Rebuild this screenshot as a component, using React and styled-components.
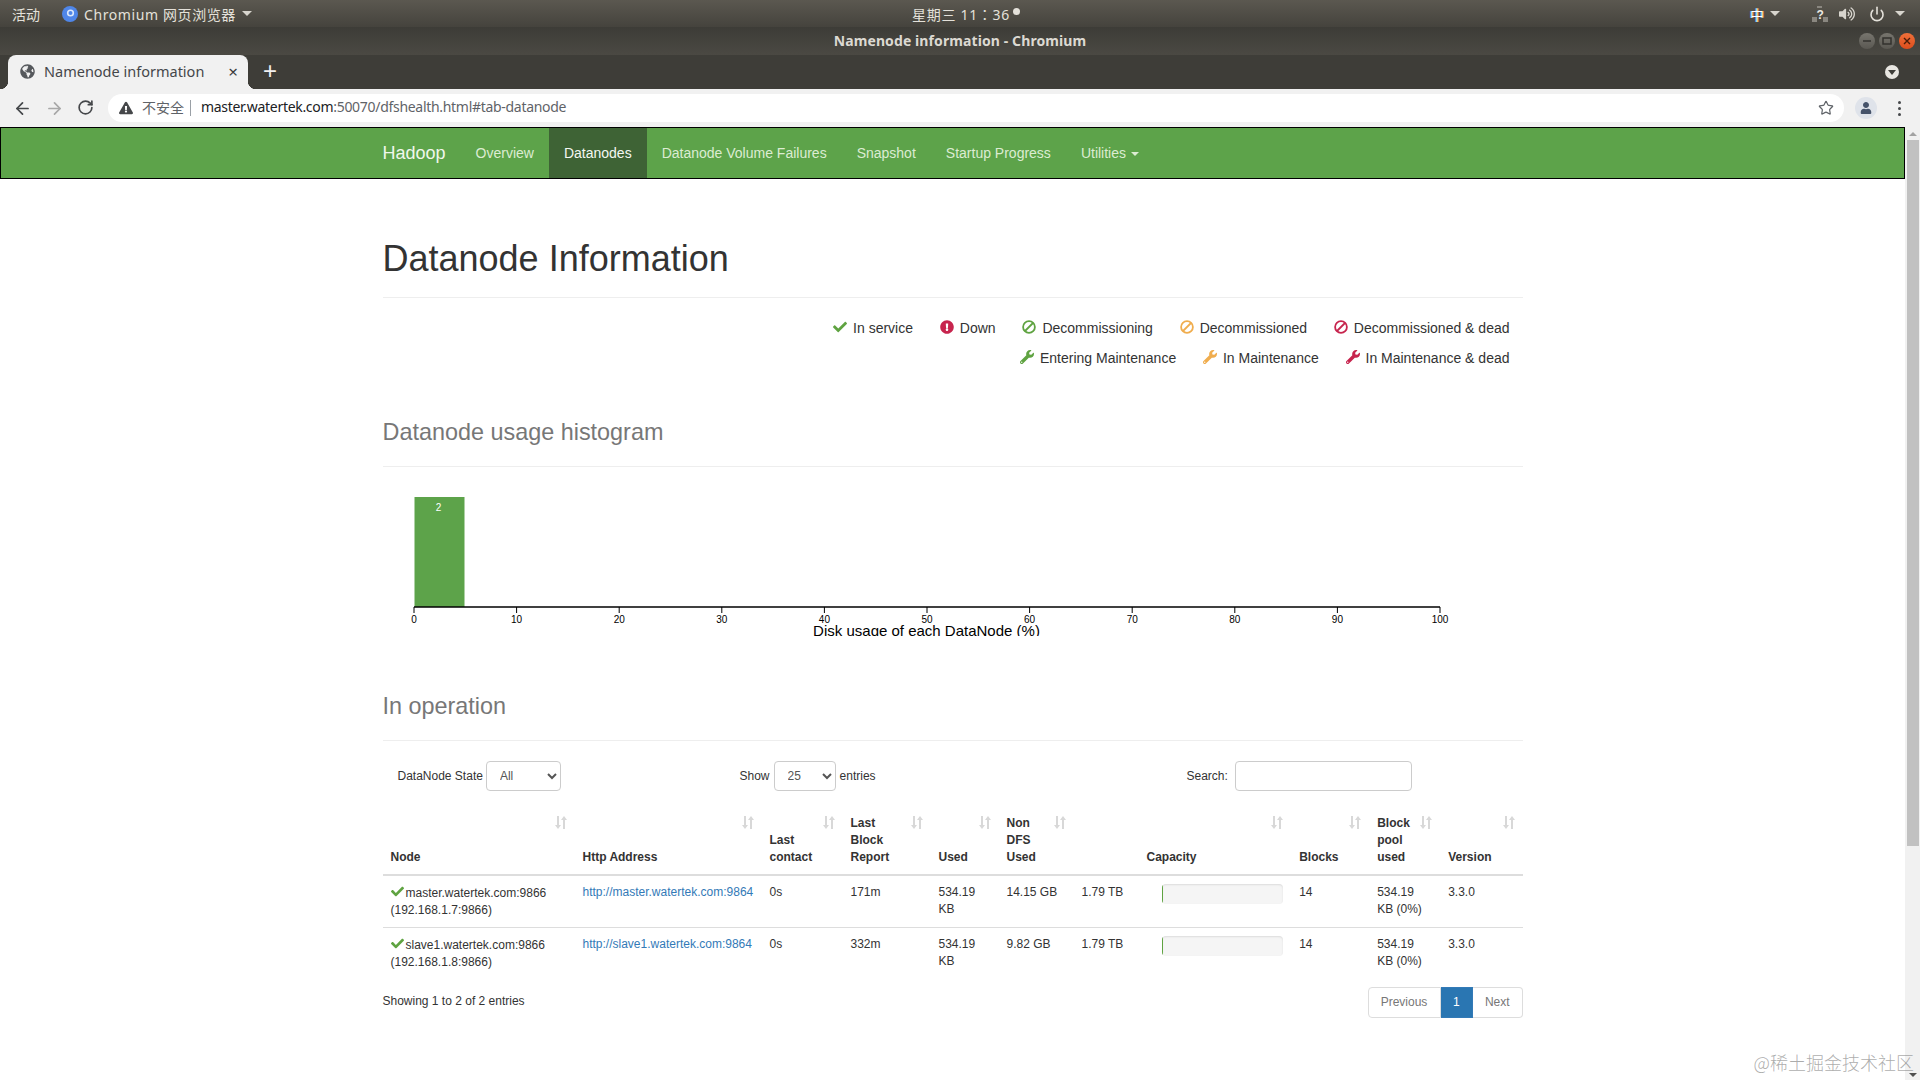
import React from "react";
import styled, { createGlobalStyle } from "styled-components";
import { FaCheck, FaExclamationCircle, FaWrench, FaGlobeAmericas, FaExclamationTriangle, FaVolumeUp, FaUser } from "react-icons/fa";
import { ArrowLeft, ArrowRight, RotateCw, Star, Power } from "lucide-react";

const GREEN = "#5fa341";
const ORANGE = "#f0ad4e";
const RED = "#c7254e";

const GlobalStyle = createGlobalStyle`
  html, body { margin: 0; padding: 0; height: 100%; overflow: hidden; background: #fff; }
  body { font-family: "Liberation Sans", Arial, sans-serif; font-size: 14px; color: #333; }
  * { box-sizing: border-box; }
`;

const Screen = styled.div`
  position: relative;
  width: 1920px;
  height: 1080px;
  display: flex;
  flex-direction: column;
  overflow: hidden;
`;

/* desktop + browser chrome */
const TopBar = styled.div`
  height: 27px;
  background: linear-gradient(#5b5850, #45433d);
  color: #e4e1da;
  font: 14px "Noto Sans", "Noto Sans CJK SC", sans-serif;
  display: grid;
  grid-template-columns: 1fr auto 1fr;
  align-items: center;
  padding: 0 12px;
`;
const TopLeft = styled.div`
  display: flex;
  align-items: center;
`;
const TopRight = styled.div`
  display: flex;
  align-items: center;
  justify-content: flex-end;
  padding-right: 3px;
`;
const AppName = styled.span`
  margin-left: 5px;
  letter-spacing: 0.6px;
`;
const ChromiumLogo = styled.svg`
  width: 16px;
  height: 16px;
  margin-left: 22px;
  margin-right: 1px;
`;
const Caret = styled.span`
  display: inline-block;
  width: 0;
  height: 0;
  margin-left: ${(p) => p.$left || 6}px;
  border-left: 5px solid transparent;
  border-right: 5px solid transparent;
  border-top: 5px solid #d8d5ce;
`;
const Clock = styled.div`
  display: flex;
  align-items: center;
  padding-left: 12px;
  font-family: "Noto Sans", "Noto Sans CJK TC", sans-serif;
  letter-spacing: 0.7px;
`;
const ClockDot = styled.span`
  width: 7px;
  height: 7px;
  margin: 0 0 4px 3px;
  border-radius: 50%;
  background: #e4e1da;
`;
const ImeGlyph = styled.span`
  color: #fff;
  font-size: 14px;
  text-shadow: -1px 0 0 #5aa9e6, 1px 0 0 #d98b3a;
`;
const TrayIcon = styled.span`
  display: inline-flex;
  margin-left: ${(p) => p.$left}px;
`;

const TitleBar = styled.div`
  height: 28px;
  padding-bottom: 2px;
  background: linear-gradient(#3d3c37, #4b4943);
  color: #dcd9d2;
  font: 700 14px "Noto Sans", sans-serif;
  letter-spacing: 0.1px;
  display: flex;
  align-items: center;
  justify-content: center;
  position: relative;
`;
const WindowButtons = styled.div`
  position: absolute;
  right: 5px;
  top: 6px;
  display: flex;
  gap: 4px;
`;
const WindowButton = styled.span`
  width: 16px;
  height: 16px;
  border-radius: 50%;
  display: flex;
  align-items: center;
  justify-content: center;
  background: ${(p) => (p.$close ? "linear-gradient(#f0703a, #dc4d1c)" : "linear-gradient(#77756e, #5a5852)")};
  color: ${(p) => (p.$close ? "#4a1c08" : "#33322e")};
`;

const TabStrip = styled.div`
  height: 34px;
  background: #3e3d38;
  display: flex;
  align-items: flex-end;
  padding-left: 8px;
  position: relative;
`;
const Tab = styled.div`
  position: relative;
  width: 240px;
  height: 34px;
  padding: 0 0 2px 12px;
  background: #f1f1f1;
  border-radius: 8px 8px 0 0;
  display: flex;
  align-items: center;
  color: #45474a;
  font: 14.5px "Noto Sans", sans-serif;
  &::before, &::after {
    content: "";
    position: absolute;
    bottom: 0;
    width: 8px;
    height: 8px;
  }
  &::before { left: -8px; background: radial-gradient(circle at 0 0, #3e3d38 8px, #f1f1f1 8.5px); }
  &::after { right: -8px; background: radial-gradient(circle at 100% 0, #3e3d38 8px, #f1f1f1 8.5px); }
`;
const TabTitle = styled.span`
  margin-left: 9px;
  flex: 1;
`;
const TabClose = styled.span`
  margin-right: 10px;
  font-size: 17px;
  color: #3c3c3c;
`;
const NewTab = styled.span`
  margin: 0 0 2px 15px;
  align-self: center;
  color: #f1f1f1;
  font: 24px "Liberation Sans", sans-serif;
`;
const TabMenu = styled.span`
  position: absolute;
  right: 21px;
  top: 10px;
  width: 14px;
  height: 14px;
  border-radius: 50%;
  background: #e8e6e1;
  display: flex;
  align-items: center;
  justify-content: center;
  &::after {
    content: "";
    border-left: 4px solid transparent;
    border-right: 4px solid transparent;
    border-top: 5px solid #3e3d38;
    margin-top: 1px;
  }
`;

const Toolbar = styled.div`
  height: 38px;
  background: #f1f1f1;
  display: flex;
  align-items: center;
`;
const NavButtons = styled.div`
  width: 108px;
  padding-left: 13px;
  display: flex;
  gap: 13px;
  color: #45474a;
`;
const Omnibox = styled.div`
  width: 1736px;
  height: 28px;
  background: #fff;
  border-radius: 14px;
  display: flex;
  align-items: center;
  padding-left: 11px;
  font: 14px "Noto Sans", "Noto Sans CJK SC", sans-serif;
`;
const NotSecure = styled.span`
  margin: 0 0 3px 9px;
  color: #5f6368;
  font-size: 14px;
`;
const OmniDivider = styled.span`
  width: 1px;
  height: 16px;
  margin: 0 10px 0 6px;
  background: #9aa0a6;
`;
const Host = styled.span`
  color: #202124;
`;
const UrlRest = styled.span`
  color: #5f6368;
`;
const Url = styled.span`
  flex: 1;
  margin-bottom: 3px;
  letter-spacing: -0.3px;
`;
const OmniStar = styled.span`
  display: inline-flex;
  margin-right: 10px;
  color: #5f6368;
`;
const Avatar = styled.span`
  width: 22px;
  height: 22px;
  margin-left: 11px;
  border-radius: 50%;
  background: #dfe3ea;
  color: #46536a;
  display: flex;
  align-items: center;
  justify-content: center;
`;
const Dots = styled.span`
  margin-left: 21px;
  display: flex;
  flex-direction: column;
  gap: 3px;
  & i { width: 3px; height: 3px; border-radius: 50%; background: #45474a; display: block; }
`;

/* the page itself */
const Viewport = styled.div`
  flex: 1;
  min-height: 0;
  display: flex;
`;
const Page = styled.div`
  flex: 1;
  min-width: 0;
  overflow: hidden;
`;
const Navbar = styled.nav`
  height: 52px;
  background: #5da34a;
  border: 1px solid #000;
`;
const Container = styled.div`
  width: 1170px;
  margin: 0 auto;
  padding: 0 15px;
`;
const NavInner = styled(Container)`
  display: flex;
  height: 50px;
`;
const Brand = styled.a`
  color: #f0f7ec;
  font-size: 18px;
  line-height: 50px;
  padding-right: 15px;
`;
const NavItem = styled.a`
  color: ${(p) => (p.$active ? "#f4f8f2" : "#dcecd2")};
  background: ${(p) => (p.$active ? "#3e6335" : "transparent")};
  padding: 0 15px;
  line-height: 50px;
`;
const NavCaret = styled.span`
  display: inline-block;
  margin-left: 5px;
  vertical-align: middle;
  border-left: 4px solid transparent;
  border-right: 4px solid transparent;
  border-top: 4px solid #dcecd2;
`;

const PageTitle = styled.div`
  margin-top: 60px;
  padding-bottom: 18px;
  border-bottom: 1px solid #eee;
  font-size: 36px;
  line-height: 40px;
  color: #333;
`;
const Legend = styled.div`
  margin-top: 15px;
  padding-right: 13px;
  display: flex;
  flex-direction: column;
`;
const LegendRow = styled.div`
  height: 30px;
  display: flex;
  justify-content: flex-end;
  align-items: center;
  gap: 26.8px;
`;
const LegendItem = styled.span`
  display: inline-flex;
  align-items: center;
  gap: 6px;
  color: ${(p) => p.$tone};
  & > svg { margin-top: -2px; }
  & > span { color: #333; }
`;
const SectionTitle = styled.div`
  margin-top: ${(p) => p.$top}px;
  padding-bottom: 20px;
  border-bottom: 1px solid #eee;
  font-size: 23.4px;
  line-height: 27px;
  color: #777;
`;
const Chart = styled.svg`
  display: block;
  margin-top: 20px;
  overflow: hidden;
`;
const Filters = styled.div`
  display: flex;
  align-items: center;
  margin-top: 20px;
  height: 30px;
  padding-left: 15px;
  font-size: 12px;
  color: #333;
`;
const FilterGroup = styled.label`
  display: flex;
  align-items: center;
  gap: ${(p) => p.$gap || 4}px;
  width: ${(p) => p.$width}px;
`;
const Select = styled.select`
  width: ${(p) => p.$width}px;
  height: 30px;
  padding: 0 9px;
  background: #fff;
  border: 1px solid #ccc;
  border-radius: 4px;
  color: #555;
  font: 12px "Liberation Sans", sans-serif;
`;
const SearchInput = styled.input`
  width: 177px;
  height: 30px;
  border: 1px solid #ccc;
  border-radius: 4px;
  background: #fff;
`;
const Table = styled.table`
  width: 1140px;
  margin-top: 16px;
  table-layout: fixed;
  border-collapse: collapse;
  font-size: 12px;
  line-height: 17px;
`;
const Th = styled.th`
  position: relative;
  vertical-align: bottom;
  text-align: left;
  padding: 8px 30px 8px 8px;
  padding-left: ${(p) => p.$left || 8}px;
  border-bottom: 2px solid #ddd;
  font-weight: 700;
`;
const SortIcon = styled.svg`
  position: absolute;
  top: 9px;
  right: 8px;
  width: 12px;
  height: 13px;
  color: #d8d8d8;
`;
const Td = styled.td`
  padding: 8px;
  vertical-align: top;
  border-top: ${(p) => (p.$first ? "0" : "1px solid #ddd")};
  color: #333;
`;
const NodeName = styled.div`
  position: relative;
  top: 1px;
  margin-bottom: 1px;
  & svg { margin-right: 2px; vertical-align: -1px; }
`;
const Link = styled.a`
  color: #337ab7;
  text-decoration: none;
`;
const Progress = styled.div`
  width: 121px;
  height: 20px;
  border-radius: 4px;
  background: #f5f5f5;
  box-shadow: inset 0 1px 2px rgba(0, 0, 0, 0.1);
  overflow: hidden;
`;
const ProgressFill = styled.div`
  height: 100%;
  background: ${GREEN};
`;
const TableFooter = styled.div`
  display: flex;
  justify-content: space-between;
  align-items: flex-start;
  margin-top: 8px;
  font-size: 12px;
  line-height: 17px;
`;
const Info = styled.div`
  padding-top: 6px;
`;
const Pagination = styled.div`
  display: flex;
  height: 31px;
`;
const PageButton = styled.a`
  width: ${(p) => p.$width}px;
  display: flex;
  align-items: center;
  justify-content: center;
  border: 1px solid ${(p) => (p.$active ? "#337ab7" : "#ddd")};
  border-left-width: ${(p) => (p.$flush ? 0 : 1)}px;
  background: ${(p) => (p.$active ? "#2a76b2" : "#fff")};
  color: ${(p) => (p.$active ? "#fff" : "#777")};
  &:first-child { border-radius: 4px 0 0 4px; }
  &:last-child { border-radius: 0 4px 4px 0; }
`;

const Scrollbar = styled.div`
  width: 15px;
  background: #f1f1f1;
  display: flex;
  flex-direction: column;
  align-items: center;
  justify-content: space-between;
  padding: 5px 0 3px;
`;
const ScrollThumb = styled.div`
  width: 12px;
  height: 706px;
  margin-top: 4px;
  background: #c1c1c1;
`;
const ScrollArrow = styled.span`
  width: 0;
  height: 0;
  border-left: 4px solid transparent;
  border-right: 4px solid transparent;
  ${(p) => (p.$up ? "border-bottom: 4px solid #a3a3a3;" : "border-top: 4px solid #505050;")}
`;
const ScrollTop = styled.div`
  display: flex;
  flex-direction: column;
  align-items: center;
`;
const Watermark = styled.div`
  position: absolute;
  right: 6px;
  bottom: 5px;
  font: 300 18px "Noto Sans CJK SC", "Noto Sans", sans-serif;
  color: rgba(90, 90, 90, 0.5);
`;

const BanIcon = () => (
  <svg width="14" height="14" viewBox="0 0 14 14" fill="none" stroke="currentColor" strokeWidth="1.8">
    <circle cx="7" cy="7" r="5.9" />
    <line x1="3" y1="11" x2="11" y2="3" />
  </svg>
);

const SortGlyph = () => (
  <SortIcon viewBox="0 0 12 13" fill="currentColor">
    <path d="M2 0h2v9h2l-3 4-3-4h2z" />
    <path d="M8 13h2V4h2L9 0 6 4h2z" />
  </SortIcon>
);

const columns = [192, 187, 81, 88, 68, 75, 80, 137.7, 78, 71, 82.3];

const nodes = [
  {
    name: "master.watertek.com:9866",
    ip: "(192.168.1.7:9866)",
    url: "http://master.watertek.com:9864",
    contact: "0s",
    report: "171m",
    nonDfs: "14.15 GB",
  },
  {
    name: "slave1.watertek.com:9866",
    ip: "(192.168.1.8:9866)",
    url: "http://slave1.watertek.com:9864",
    contact: "0s",
    report: "332m",
    nonDfs: "9.82 GB",
  },
];

const ticks = [0, 10, 20, 30, 40, 50, 60, 70, 80, 90, 100];

const Histogram = () => (
  <Chart width="1140" height="149" viewBox="0 0 1140 149">
    <rect x="31.5" y="10" width="50" height="110" fill="#5da34a" />
    <text x="55.5" y="24" fill="#fff" fontSize="10" textAnchor="middle" fontFamily="Liberation Sans">2</text>
    <line x1="31" y1="120" x2="1057" y2="120" stroke="#000" strokeWidth="1.5" />
    {ticks.map((t, i) => (
      <g key={t}>
        <line x1={31 + i * 102.6} y1="120" x2={31 + i * 102.6} y2="126" stroke="#000" />
        <text x={31 + i * 102.6} y="136" fontSize="10" textAnchor="middle" fontFamily="Liberation Sans" fill="#000">{t}</text>
      </g>
    ))}
    <text x="543.5" y="148.5" fontSize="15" textAnchor="middle" fontFamily="Liberation Sans" fill="#000">Disk usage of each DataNode (%)</text>
  </Chart>
);

const App = () => {
  return (
    <Screen>
      <GlobalStyle />
      <TopBar>
        <TopLeft>
          <span>活动</span>
          <ChromiumLogo viewBox="0 0 16 16">
            <circle cx="8" cy="8" r="8" fill="#4f86e8" />
            <circle cx="8.5" cy="7" r="3.6" fill="#dce8fb" />
            <circle cx="8.5" cy="7" r="2" fill="#4f86e8" />
          </ChromiumLogo>
          <AppName>Chromium 网页浏览器</AppName>
          <Caret />
        </TopLeft>
        <Clock>
          星期三 11：36
          <ClockDot />
        </Clock>
        <TopRight>
          <ImeGlyph>中</ImeGlyph>
          <Caret $left={6} />
          <TrayIcon $left={32}>
            <svg width="16" height="16" viewBox="0 0 16 16">
              <rect x="0" y="11" width="5" height="5" fill="#8a8780" />
              <rect x="11" y="11" width="5" height="5" fill="#8a8780" />
              <rect x="5" y="0" width="5" height="2" fill="#8a8780" />
              <text x="4.5" y="13" fontSize="12" fontWeight="700" fontFamily="Liberation Sans" fill="#ece9e3">?</text>
            </svg>
          </TrayIcon>
          <TrayIcon $left={11}>
            <FaVolumeUp size={16} color="#d8d5ce" />
          </TrayIcon>
          <TrayIcon $left={14}>
            <Power size={16} color="#e4e1da" strokeWidth={2.4} />
          </TrayIcon>
          <Caret $left={10} />
        </TopRight>
      </TopBar>
      <TitleBar>
        Namenode information - Chromium
        <WindowButtons>
          <WindowButton>
            <svg width="10" height="10" viewBox="0 0 10 10" fill="none" stroke="currentColor" strokeWidth="1.5">
              <line x1="1" y1="5" x2="9" y2="5" />
            </svg>
          </WindowButton>
          <WindowButton>
            <svg width="10" height="10" viewBox="0 0 10 10" fill="none" stroke="currentColor" strokeWidth="1.5">
              <rect x="1" y="2" width="8" height="6" />
            </svg>
          </WindowButton>
          <WindowButton $close>
            <svg width="10" height="10" viewBox="0 0 10 10" fill="none" stroke="currentColor" strokeWidth="1.4">
              <path d="M2 2l6 6M8 2l-6 6" />
            </svg>
          </WindowButton>
        </WindowButtons>
      </TitleBar>
      <TabStrip>
        <Tab>
          <FaGlobeAmericas size={15} color="#55585c" />
          <TabTitle>Namenode information</TabTitle>
          <TabClose>×</TabClose>
        </Tab>
        <NewTab>+</NewTab>
        <TabMenu />
      </TabStrip>
      <Toolbar>
        <NavButtons>
          <ArrowLeft size={19} strokeWidth={2.2} />
          <ArrowRight size={19} strokeWidth={2.2} color="#a8a8a8" />
          <RotateCw size={17} strokeWidth={2.4} />
        </NavButtons>
        <Omnibox>
          <FaExclamationTriangle size={14} color="#45474a" />
          <NotSecure>不安全</NotSecure>
          <OmniDivider />
          <Url>
            <Host>master.watertek.com</Host>
            <UrlRest>:50070/dfshealth.html#tab-datanode</UrlRest>
          </Url>
          <OmniStar>
            <Star size={16} strokeWidth={1.8} />
          </OmniStar>
        </Omnibox>
        <Avatar>
          <FaUser size={12} />
        </Avatar>
        <Dots>
          <i />
          <i />
          <i />
        </Dots>
      </Toolbar>
      <Viewport>
        <Page>
          <Navbar>
            <NavInner>
              <Brand>Hadoop</Brand>
              <NavItem>Overview</NavItem>
              <NavItem $active>Datanodes</NavItem>
              <NavItem>Datanode Volume Failures</NavItem>
              <NavItem>Snapshot</NavItem>
              <NavItem>Startup Progress</NavItem>
              <NavItem>
                Utilities
                <NavCaret />
              </NavItem>
            </NavInner>
          </Navbar>
          <Container>
            <PageTitle>Datanode Information</PageTitle>
            <Legend>
              <LegendRow>
                <LegendItem $tone={GREEN}>
                  <FaCheck size={14} />
                  <span>In service</span>
                </LegendItem>
                <LegendItem $tone={RED}>
                  <FaExclamationCircle size={14} />
                  <span>Down</span>
                </LegendItem>
                <LegendItem $tone={GREEN}>
                  <BanIcon />
                  <span>Decommissioning</span>
                </LegendItem>
                <LegendItem $tone={ORANGE}>
                  <BanIcon />
                  <span>Decommissioned</span>
                </LegendItem>
                <LegendItem $tone={RED}>
                  <BanIcon />
                  <span>Decommissioned &amp; dead</span>
                </LegendItem>
              </LegendRow>
              <LegendRow>
                <LegendItem $tone={GREEN}>
                  <FaWrench size={14} />
                  <span>Entering Maintenance</span>
                </LegendItem>
                <LegendItem $tone={ORANGE}>
                  <FaWrench size={14} />
                  <span>In Maintenance</span>
                </LegendItem>
                <LegendItem $tone={RED}>
                  <FaWrench size={14} />
                  <span>In Maintenance &amp; dead</span>
                </LegendItem>
              </LegendRow>
            </Legend>
            <SectionTitle $top={46}>Datanode usage histogram</SectionTitle>
            <Histogram />
            <SectionTitle $top={57}>In operation</SectionTitle>
            <Filters>
              <FilterGroup $width={342} $gap={3}>
                DataNode State
                <Select $width={75} defaultValue="All">
                  <option>All</option>
                </Select>
              </FilterGroup>
              <FilterGroup $width={447}>
                Show
                <Select $width={62} defaultValue="25">
                  <option>25</option>
                </Select>
                entries
              </FilterGroup>
              <FilterGroup $gap={7}>
                Search:
                <SearchInput />
              </FilterGroup>
            </Filters>
            <Table>
              <colgroup>
                {columns.map((w, i) => (
                  <col key={i} style={{ width: w }} />
                ))}
              </colgroup>
              <thead>
                <tr>
                  <Th>Node<SortGlyph /></Th>
                  <Th>Http Address<SortGlyph /></Th>
                  <Th>Last contact<SortGlyph /></Th>
                  <Th>Last Block Report<SortGlyph /></Th>
                  <Th>Used<SortGlyph /></Th>
                  <Th>Non DFS Used<SortGlyph /></Th>
                  <Th colSpan={2} $left={73}>Capacity<SortGlyph /></Th>
                  <Th>Blocks<SortGlyph /></Th>
                  <Th>Block pool used<SortGlyph /></Th>
                  <Th>Version<SortGlyph /></Th>
                </tr>
              </thead>
              <tbody>
                {nodes.map((node, i) => (
                  <tr key={node.name}>
                    <Td $first={i === 0}>
                      <NodeName>
                        <FaCheck size={13} color={GREEN} />
                        {node.name}
                        <br />
                        {node.ip}
                      </NodeName>
                    </Td>
                    <Td $first={i === 0}>
                      <Link href="#">{node.url}</Link>
                    </Td>
                    <Td $first={i === 0}>{node.contact}</Td>
                    <Td $first={i === 0}>{node.report}</Td>
                    <Td $first={i === 0}>534.19 KB</Td>
                    <Td $first={i === 0}>{node.nonDfs}</Td>
                    <Td $first={i === 0}>1.79 TB</Td>
                    <Td $first={i === 0}>
                      <Progress>
                        <ProgressFill style={{ width: "1px" }} />
                      </Progress>
                    </Td>
                    <Td $first={i === 0}>14</Td>
                    <Td $first={i === 0}>534.19 KB (0%)</Td>
                    <Td $first={i === 0}>3.3.0</Td>
                  </tr>
                ))}
              </tbody>
            </Table>
            <TableFooter>
              <Info>Showing 1 to 2 of 2 entries</Info>
              <Pagination>
                <PageButton $width={73}>Previous</PageButton>
                <PageButton $width={32.5} $active $flush>1</PageButton>
                <PageButton $width={49.5} $flush>Next</PageButton>
              </Pagination>
            </TableFooter>
          </Container>
        </Page>
        <Scrollbar>
          <ScrollTop>
            <ScrollArrow $up />
            <ScrollThumb />
          </ScrollTop>
          <ScrollArrow />
        </Scrollbar>
      </Viewport>
      <Watermark>@稀土掘金技术社区</Watermark>
    </Screen>
  );
};

export default App;
